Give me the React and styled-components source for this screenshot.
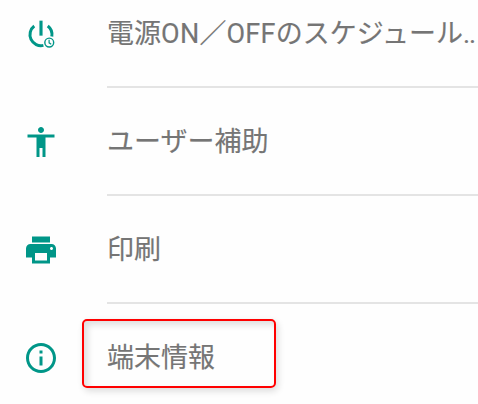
import styled, { createGlobalStyle } from 'styled-components';

const items = [
    { id: 'power', parts: [['電源'], ['ON', 'latin'], ['／'], ['OFF', 'latin'], ['のスケジュール'], ['..', 'dots']] },
    { id: 'access', parts: [['ユーザー補助']] },
    { id: 'print', parts: [['印刷']] },
    { id: 'about', parts: [['端末情報']], marked: true },
];

const icons = {
    power: <g fill="none" stroke="currentColor">
        <path d="M12 3.1v10" strokeWidth="2.1" />
        <path d="M7.5 6.7A7.3 7.3 0 0 0 13.6 19.6M16.5 6.7A7.3 7.3 0 0 1 19.2 13.7" strokeWidth="2" />
        <circle cx="17.5" cy="17.7" r="2.95" strokeWidth=".95" />
        <path d="M17.4 15.9v2l1.4 1" strokeWidth=".8" />
    </g>,
    access: <path d="M12 2c1.1 0 2 .9 2 2s-.9 2-2 2-2-.9-2-2 .9-2 2-2zm9 7h-6v13h-2v-6h-2v6H9V9H3V7h18v2z" />,
    print: <path d="M19 8H5c-1.66 0-3 1.34-3 3v6h4v4h12v-4h4v-6c0-1.66-1.34-3-3-3zm-3 11H8v-5h8v5zm3-7c-.55 0-1-.45-1-1s.45-1 1-1 1 .45 1 1-.45 1-1 1zm-1-9H6v4h12V3z" />,
    about: <path d="M11 17h2v-6h-2v6zm1-15C6.48 2 2 6.48 2 12s4.48 10 10 10 10-4.48 10-10S17.52 2 12 2zm0 18c-4.41 0-8-3.59-8-8s3.59-8 8-8 8 3.59 8 8-3.59 8-8 8zM11 9h2V7h-2v2z" />,
};

export default function App(){
    return <Screen>
        <Global />
        <List>
            {items.map(({id, parts, marked}) => (
                <Row key={id}>
                    <Icon viewBox="0 0 24 24">{icons[id]}</Icon>
                    <LabelCont $line={!marked}>
                        <Label>
                            {parts.map(([text, kind], i) => <Part key={i} $kind={kind}>{text}</Part>)}
                        </Label>
                        {marked && <Mark />}
                    </LabelCont>
                </Row>
            ))}
        </List>
    </Screen>
}

const Global = createGlobalStyle`
body{
margin:0;
background:#fefefe;
overflow:hidden;
}
`;

const Screen = styled.div`
width:478px;
height:404px;
overflow:hidden;
background:#fefefe;
`;

//the list is scrolled a little past its first row
const List = styled.div`
display:flex;
flex-direction:column;
margin-top:-20px;
`;

const Row = styled.div`
display:flex;
align-items:center;
height:108px;
flex-shrink:0;
padding-left:23px;
`;

const Icon = styled.svg`
width:36px;
height:36px;
flex-shrink:0;
fill:#009688;
color:#009688;
`;

const LabelCont = styled.div`
position:relative;
display:flex;
align-items:center;
flex:1;
box-sizing:border-box;
height:108px;
margin-left:48px;
border-bottom:2px solid ${p => p.$line ? '#e4e4e4' : 'transparent'};
`;

const Label = styled.div`
position:relative;
z-index:1;
display:flex;
align-items:baseline;
height:40px;
padding-bottom:3px;
color:#757575;
font-family:"Noto Sans CJK JP", sans-serif;
font-size:27px;
line-height:40px;
white-space:nowrap;
-webkit-text-stroke:0.15px #757575;
`;

const Part = styled.span`
font-family:${p => p.$kind ? 'Roboto, "Noto Sans CJK JP", sans-serif' : 'inherit'};
letter-spacing:${p => p.$kind === 'dots' ? '-0.9px' : p.$kind === 'latin' ? '0.3px' : '0'};
`;

//red frame round the chosen entry
const Mark = styled.div`
position:absolute;
box-sizing:border-box;
left:-25px;
top:15px;
width:194px;
height:69px;
border:2px solid #f00;
border-radius:5px;
box-shadow:2px 3px 7px rgba(0,0,0,0.14), inset 4px 4px 6px rgba(0,0,0,0.12);
`;
